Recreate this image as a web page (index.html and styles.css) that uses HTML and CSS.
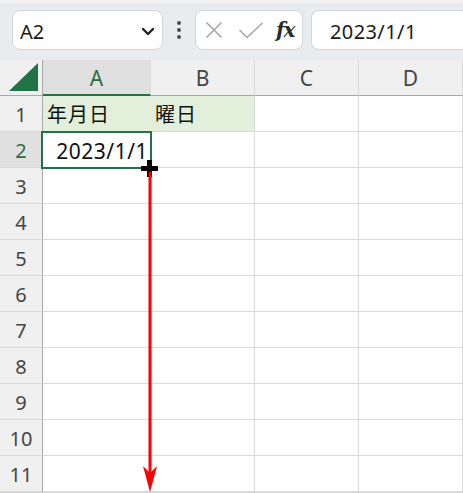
FILE: index.html
```html
<!DOCTYPE html>
<html lang="ja">
<head>
<meta charset="utf-8">
<title>Sheet</title>
<link rel="stylesheet" href="styles.css">
</head>
<body>
<div class="app">
  <div class="toolbar">
    <div class="namebox">
      <span class="namebox-text">A2</span>
      <svg class="chev" width="14" height="9" viewBox="0 0 14 9"><path d="M2 2 L7 7 L12 2" fill="none" stroke="#222" stroke-width="2.4" stroke-linecap="round" stroke-linejoin="round"/></svg>
    </div>
    <div class="dots"><span></span><span></span><span></span></div>
    <div class="fxbox">
      <svg class="ico-x" width="18" height="18" viewBox="0 0 18 18"><path d="M1.5 1.5 L16.5 16.5 M16.5 1.5 L1.5 16.5" stroke="#a3a6aa" stroke-width="1.6" fill="none"/></svg>
      <svg class="ico-check" width="26" height="17" viewBox="0 0 26 17"><path d="M1.5 8 L9 15.5 L24.5 1" stroke="#a3a6aa" stroke-width="1.6" fill="none"/></svg>
      <span class="fx">fx</span>
    </div>
    <div class="formula"><span class="formula-text">2023/1/1</span></div>
  </div>
  <div class="sheet">
    <div class="grid">
      <div class="corner"><svg width="30" height="29" viewBox="0 0 30 29"><polygon points="29,0 29,28 0,28" fill="#217346"/></svg></div>
      <div class="ch sel">A</div>
      <div class="ch">B</div>
      <div class="ch">C</div>
      <div class="ch">D</div>

      <div class="rh">1</div>
      <div class="c fill jp">年月日</div>
      <div class="c fill jp">曜日</div>
      <div class="c"></div>
      <div class="c"></div>

      <div class="rh sel">2</div>
      <div class="c num">2023/1/1</div>
      <div class="c"></div>
      <div class="c"></div>
      <div class="c"></div>

      <div class="rh">3</div><div class="c"></div><div class="c"></div><div class="c"></div><div class="c"></div>
      <div class="rh">4</div><div class="c"></div><div class="c"></div><div class="c"></div><div class="c"></div>
      <div class="rh">5</div><div class="c"></div><div class="c"></div><div class="c"></div><div class="c"></div>
      <div class="rh">6</div><div class="c"></div><div class="c"></div><div class="c"></div><div class="c"></div>
      <div class="rh">7</div><div class="c"></div><div class="c"></div><div class="c"></div><div class="c"></div>
      <div class="rh">8</div><div class="c"></div><div class="c"></div><div class="c"></div><div class="c"></div>
      <div class="rh">9</div><div class="c"></div><div class="c"></div><div class="c"></div><div class="c"></div>
      <div class="rh">10</div><div class="c"></div><div class="c"></div><div class="c"></div><div class="c"></div>
      <div class="rh">11</div><div class="c"></div><div class="c"></div><div class="c"></div><div class="c"></div>
    </div>
    <div class="selection"></div>
    <div class="plus"><span class="ph"></span><span class="pv"></span></div>
    <svg class="arrow" width="16" height="322" viewBox="0 0 16 322">
      <rect x="6.5" y="0" width="3" height="304" fill="#ff0000"/>
      <polygon points="1,294 8,320 15,294 8,301" fill="#ff0000"/>
    </svg>
  </div>
</div>
</body>
</html>
```

FILE: styles.css
```css
* { box-sizing: border-box; }
html, body { margin: 0; padding: 0; }
body {
  width: 463px;
  height: 493px;
  overflow: hidden;
  background: #ffffff;
  font-family: "Noto Sans", "Noto Sans CJK JP", sans-serif;
  color: #222;
}
.app { width: 463px; }

.toolbar {
  height: 60px;
  background: #e9ecef;
  border-top: 3px solid #f1f2f4;
  display: flex;
  align-items: flex-start;
  padding: 7px 0 0 12px;
  white-space: nowrap;
  overflow: hidden;
}
.namebox {
  flex: 0 0 151px;
  height: 40px;
  background: #fff;
  border: 1px solid #d3d6da;
  border-radius: 8px;
  display: flex;
  align-items: center;
  justify-content: space-between;
  padding: 0 7px 0 7px;
}
.namebox-text { font-size: 20px; color: #1a1a1a; padding-top: 3px; }
.chev { margin-top: 2px; }
.dots {
  flex: 0 0 32px;
  height: 40px;
  display: flex;
  flex-direction: column;
  align-items: center;
  justify-content: center;
  gap: 3px;
}
.dots span { width: 4px; height: 4px; border-radius: 50%; background: #4a4d51; }
.fxbox {
  flex: 0 0 108px;
  height: 40px;
  background: #fff;
  border: 1px solid #d3d6da;
  border-radius: 8px;
  display: flex;
  align-items: center;
  padding-left: 9px;
}
.ico-x { margin-right: 15px; }
.ico-check { margin-right: 12px; }
.fx {
  font-family: "DejaVu Serif", "Liberation Serif", serif;
  font-style: italic;
  font-weight: bold;
  font-size: 20px;
  color: #2b2b2b;
  letter-spacing: -1px;
}
.formula {
  flex: 0 0 170px;
  height: 40px;
  margin-left: 8px;
  background: #fff;
  border: 1px solid #d3d6da;
  border-right: none;
  border-radius: 8px 0 0 8px;
  display: flex;
  align-items: center;
  padding-left: 18px;
}
.formula-text { font-size: 20px; color: #1a1a1a; letter-spacing: 0.4px; padding-top: 2px; }

.sheet {
  position: relative;
  height: 433px;
  overflow: hidden;
  border-bottom: 1px solid #d9d9d9;
}
.grid {
  display: grid;
  grid-template-columns: 43px 108px 104px 104px 104px;
  grid-auto-rows: 36px;
}
.grid > div {
  border-right: 1px solid #d9d9d9;
  border-bottom: 1px solid #d9d9d9;
  display: flex;
  align-items: center;
  overflow: hidden;
}
.corner {
  background: #f0f0f0;
  border-right-color: #a8a8a8 !important;
  border-bottom-color: #a8a8a8 !important;
  justify-content: flex-end;
  align-items: flex-end !important;
  padding: 0 3px 3px 0;
}
.corner svg { display: block; }
.ch {
  background: #f0f0f0;
  border-bottom-color: #a8a8a8 !important;
  justify-content: center;
  font-size: 21px;
  color: #454545;
  padding-top: 1px;
}
.ch.sel {
  background: #e0e0e0;
  color: #2e6b45;
  border-bottom: 2px solid #217346 !important;
}
.rh {
  background: #f0f0f0;
  border-right-color: #a8a8a8 !important;
  justify-content: center;
  font-size: 20px;
  color: #454545;
  padding-top: 1px;
}
.rh.sel { background: #e0e0e0; color: #2e6b45; }
.c { background: #fff; font-size: 20px; color: #111; }
.c.fill { background: #e2efda; border-right-color: #e2efda !important; }
.grid > .c.fill + .c.fill { border-right-color: #d9d9d9 !important; }
.jp {
  font-family: "Noto Sans CJK JP", sans-serif;
  padding-left: 4px;
  font-size: 20px;
  letter-spacing: 1px;
}
.num {
  justify-content: flex-end;
  padding-right: 2px;
  font-size: 21px;
  letter-spacing: 0.5px;
  padding-top: 2px;
}

.selection {
  position: absolute;
  left: 41px;
  top: 71px;
  width: 111px;
  height: 38px;
  border: 2px solid #217346;
  pointer-events: none;
}
.plus {
  position: absolute;
  left: 141px;
  top: 100px;
  width: 17px;
  height: 17px;
}
.plus .ph {
  position: absolute;
  left: 0; top: 6px;
  width: 17px; height: 5px;
  background: #000;
}
.plus .pv {
  position: absolute;
  left: 6px; top: 0;
  width: 5px; height: 17px;
  background: #000;
}
.arrow {
  position: absolute;
  left: 142px;
  top: 112px;
}
```
